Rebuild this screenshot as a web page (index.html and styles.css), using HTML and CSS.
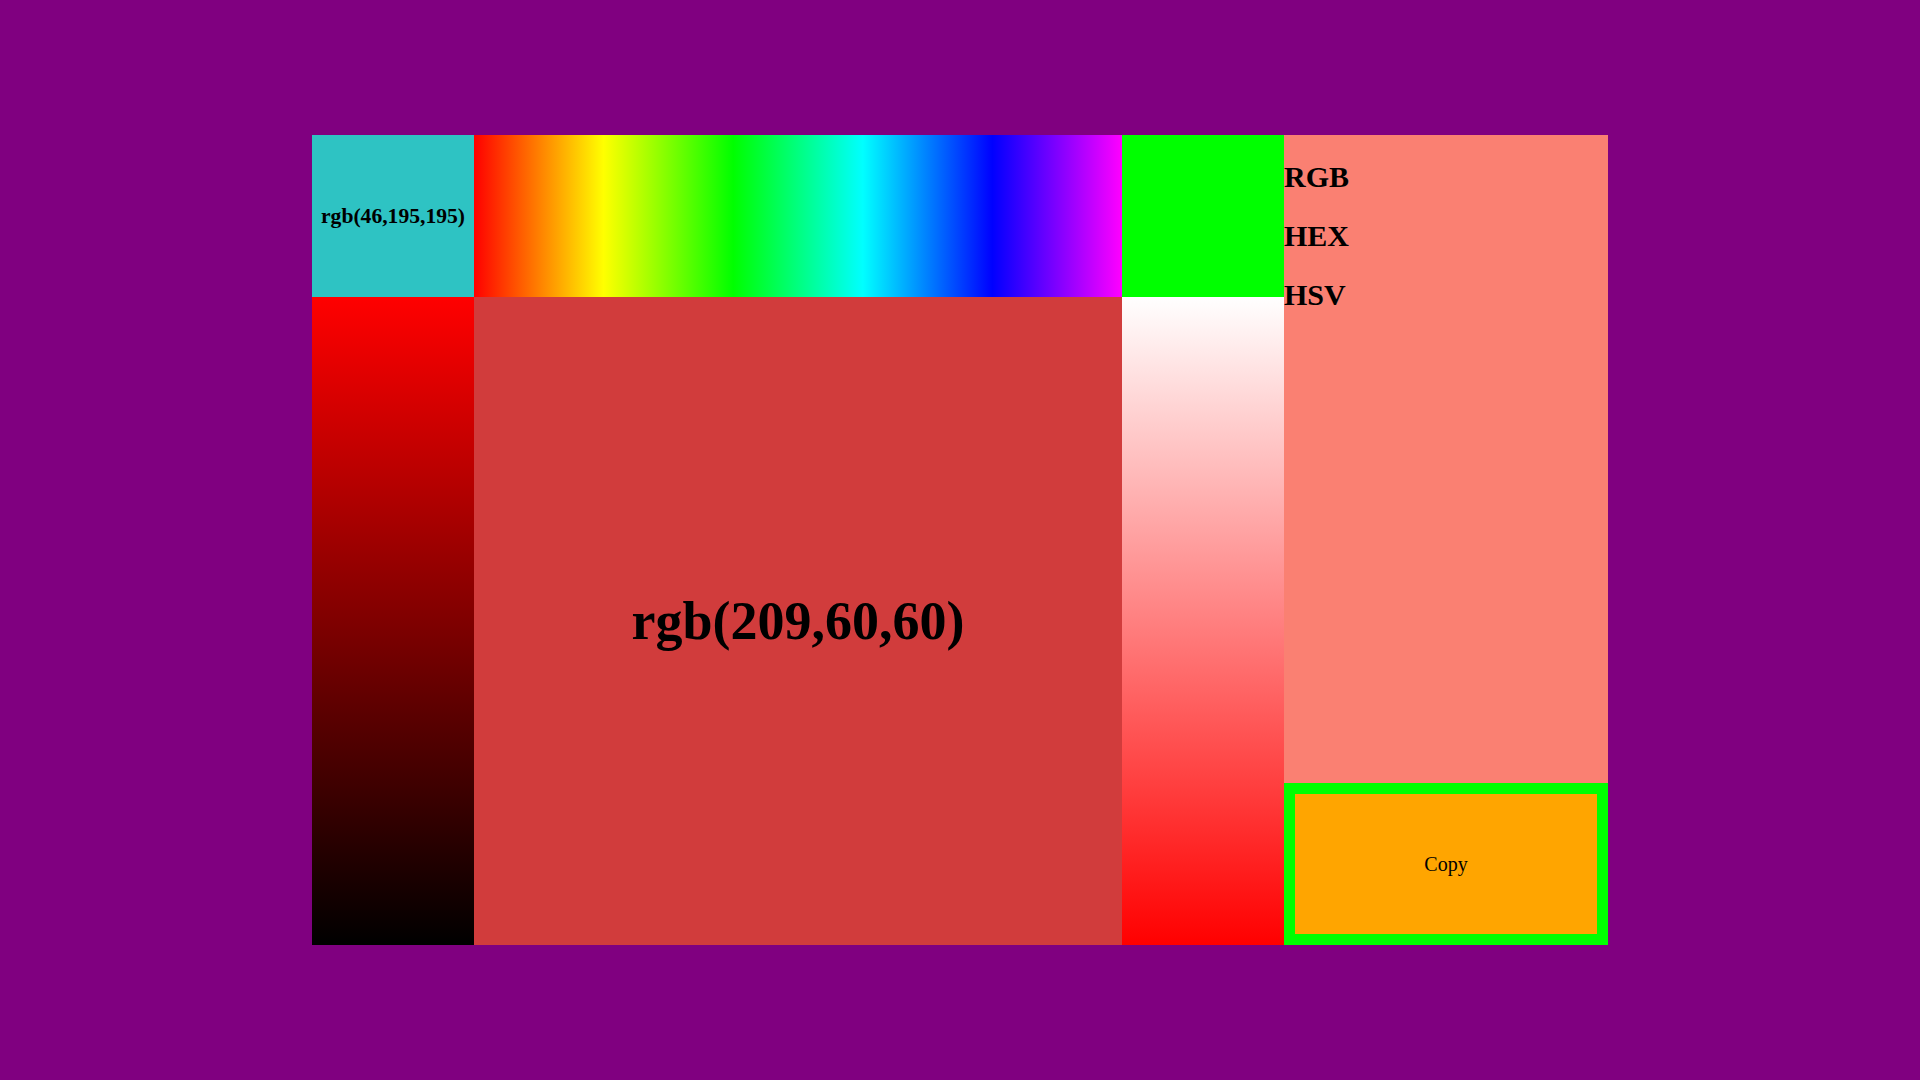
FILE: index.html
```html
<!DOCTYPE html>
<html>
<head>
<meta charset="utf-8">
<link rel="stylesheet" href="styles.css">
</head>
<body>
<div class="picker">
  <div class="current"><span>rgb(46,195,195)</span></div>
  <div class="hue"></div>
  <div class="swatch"></div>
  <div class="panel">
    <div class="labels">
      <h2 class="label">RGB</h2>
      <h2 class="label">HEX</h2>
      <h2 class="label">HSV</h2>
    </div>
    <button class="copy">Copy</button>
  </div>
  <div class="shade"></div>
  <div class="main"><span>rgb(209,60,60)</span></div>
  <div class="tint"></div>
</div>
</body>
</html>
```
FILE: styles.css
```css
html, body {
  margin: 0;
  padding: 0;
  height: 100%;
}
body {
  background: #800080;
  font-family: "Liberation Serif", "Times New Roman", serif;
  display: flex;
  align-items: center;
  justify-content: center;
}
.picker {
  display: grid;
  grid-template-columns: repeat(8, 162px);
  grid-template-rows: repeat(5, 162px);
}
.current {
  grid-column: 1;
  grid-row: 1;
  background: rgb(46,195,195);
  display: flex;
  align-items: center;
  justify-content: center;
  font-weight: bold;
  font-size: 21.6px;
}
.hue {
  grid-column: 2 / 6;
  grid-row: 1;
  background: linear-gradient(to right, #ff0000, #ffff00, #00ff00, #00ffff, #0000ff, #ff00ff);
}
.swatch {
  grid-column: 6;
  grid-row: 1;
  background: #00ff00;
}
.panel {
  grid-column: 7 / 9;
  grid-row: 1 / 6;
  background: #fa8072;
  display: flex;
  flex-direction: column;
  justify-content: space-between;
}
.labels {
  display: flow-root;
}
.label {
  font-size: 30px;
  font-weight: bold;
  margin: 0.83em 0;
}
.copy {
  height: 162px;
  width: 100%;
  border: 11px solid #00ff00;
  background: #ffa500;
  font-family: "Liberation Serif", "Times New Roman", serif;
  font-size: 20px;
  color: #000;
  padding: 0;
}
.shade {
  grid-column: 1;
  grid-row: 2 / 6;
  background: linear-gradient(to bottom, #ff0000, #000000);
}
.main {
  grid-column: 2 / 6;
  grid-row: 2 / 6;
  background: rgb(209,60,60);
  display: flex;
  align-items: center;
  justify-content: center;
  font-weight: bold;
  font-size: 54px;
}
.tint {
  grid-column: 6;
  grid-row: 2 / 6;
  background: linear-gradient(to bottom, #ffffff, #ff0000);
}
```
